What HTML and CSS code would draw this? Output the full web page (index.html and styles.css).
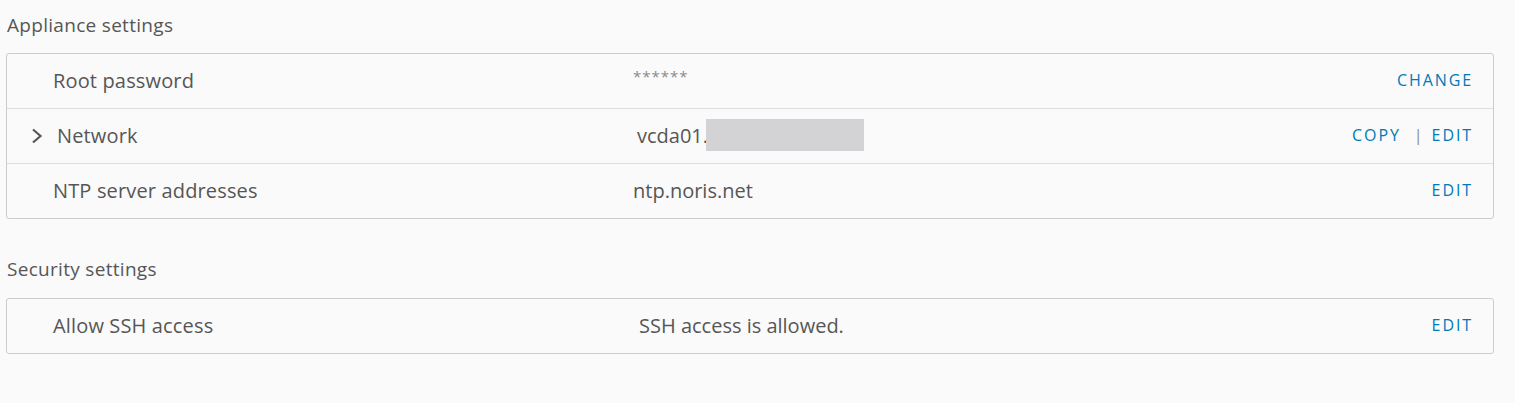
FILE: index.html
```html
<!DOCTYPE html>
<html lang="en">
<head>
  <meta charset="UTF-8" />
  <meta name="viewport" content="width=device-width, initial-scale=1.0"/>
  <title>Appliance settings</title>
  <link rel="stylesheet" href="styles.css">
</head>
<body>
  <div class="page">
    <h2 class="section-title">Appliance settings</h2>
    <div class="settings-card">
      <div class="setting-row">
        <div class="setting-label">Root password</div>
        <div class="setting-value masked">******</div>
        <div class="setting-actions"><a href="#">Change</a></div>
      </div>
      <div class="setting-row">
        <div class="setting-label expandable">
          <svg class="chevron" width="12" height="16" viewBox="0 0 12 16"><path d="M2 1.5 L9.5 8 L2 14.5" fill="none" stroke="#565656" stroke-width="2.2"/></svg>
          Network
        </div>
        <div class="setting-value host">vcda01.<span class="redacted"></span></div>
        <div class="setting-actions"><a href="#">Copy</a><span class="sep">|</span><a href="#">Edit</a></div>
      </div>
      <div class="setting-row">
        <div class="setting-label">NTP server addresses</div>
        <div class="setting-value">ntp.noris.net</div>
        <div class="setting-actions"><a href="#">Edit</a></div>
      </div>
    </div>

    <h2 class="section-title second">Security settings</h2>
    <div class="settings-card">
      <div class="setting-row">
        <div class="setting-label">Allow SSH access</div>
        <div class="setting-value ssh">SSH access is allowed.</div>
        <div class="setting-actions"><a href="#">Edit</a></div>
      </div>
    </div>
  </div>
</body>
</html>
```

FILE: styles.css
```css
body { margin: 0; padding: 0; background-color: #fafafa; font-family: "Open Sans", Arial, sans-serif; color: #565656; }
.page { padding: 0 0 0 6px; width: 1488px; }
.section-title { font-size: 19px; font-weight: 400; letter-spacing: 0.3px; margin: 0; padding-top: 12px; height: 41px; padding-left: 1px; line-height: 26px; }
.section-title.second { margin-top: 35px; height: 42px; padding-top: 2px; }
.settings-card { border: 1px solid #cccccc; border-radius: 3px; background-color: #fafafa; }
.setting-row { display: flex; align-items: center; height: 52px; padding-bottom: 2px; border-top: 1px solid #dddddd; }
.setting-row:first-child { border-top: none; }
.setting-label { width: 580px; padding-left: 46px; font-size: 20px; letter-spacing: 0.15px; position: relative; }
.setting-label.expandable { width: 576px; padding-left: 50px; }
.chevron { position: absolute; left: 24px; top: 6px; }
.setting-value { flex: 1; font-size: 20px; display: flex; align-items: center; }
.setting-value.host { padding-left: 4px; }
.setting-value.ssh { padding-left: 6px; }
.masked { font-size: 15px; color: #8a8a8a; letter-spacing: 1px; margin-top: -8px; }
.redacted { display: inline-block; width: 158px; height: 32px; margin-left: -2px; background-color: #d3d3d5; }
.setting-actions { padding-right: 20px; font-size: 16px; letter-spacing: 1.9px; text-transform: uppercase; display: flex; align-items: center; }
.setting-actions a { color: #0079b8; text-decoration: none; }
.sep { color: #8c8c8c; margin: 0 9px 0 13px; letter-spacing: 0; }
```
